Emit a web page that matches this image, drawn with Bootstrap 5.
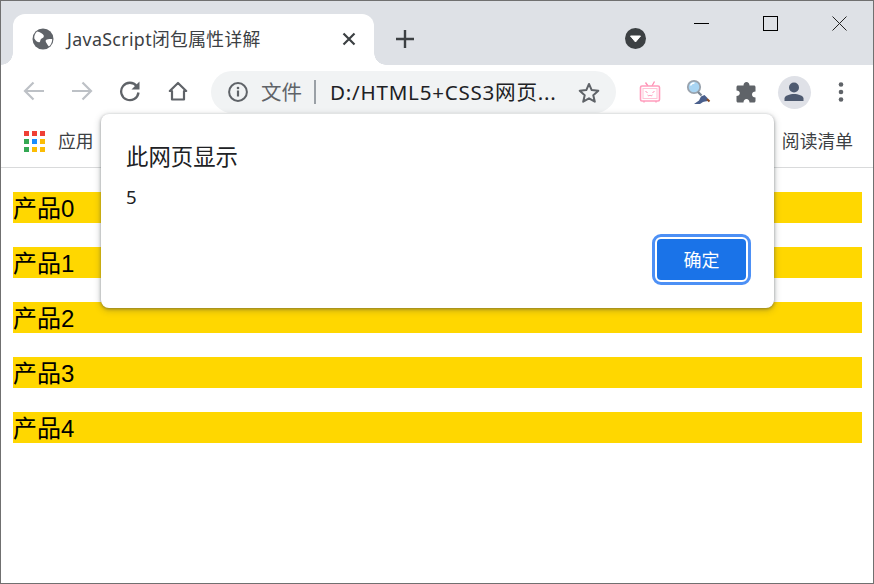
<!DOCTYPE html>
<html lang="zh">
<head>
<meta charset="utf-8">
<title>JavaScript闭包属性详解</title>
<link href="https://cdn.jsdelivr.net/npm/bootstrap@5.3.0/dist/css/bootstrap.min.css" rel="stylesheet">
<style>
html,body{margin:0;height:100%;background:#fff}
body{font-family:"Noto Sans","Noto Sans CJK SC",sans-serif;overflow:hidden}
.chrome-win{width:874px;height:584px;border:1px solid #707070;position:relative;overflow:hidden;background:#fff;color:#202124}
.tabstrip{height:64px;background:#dee1e6;padding:13px 0 0 12px}
.tabstrip>*{flex-shrink:0}
.tab-cur{width:361px;height:51px;background:#fff;border-radius:12px 12px 0 0;position:relative;padding:0 18px 1px 19px}
.tab-cur::before,.tab-cur::after{content:"";position:absolute;bottom:0;width:12px;height:12px}
.tab-cur::before{left:-12px;background:radial-gradient(circle at 0 0,#dee1e6 11.5px,#fff 12px)}
.tab-cur::after{right:-12px;background:radial-gradient(circle at 100% 0,#dee1e6 11.5px,#fff 12px)}
.tab-title{font-size:17.8px;margin-left:13px;color:#3c4043;white-space:nowrap;letter-spacing:.35px}
.newtab{margin-left:22px;margin-top:-2px}
.media-btn{margin-left:211px;margin-top:-2px}
.win-ctrls{margin-left:auto;margin-right:-1px;align-self:flex-start;margin-top:-13px}
.win-ctrl{width:69px;height:45px}
.toolbar{height:51px;padding:6px 0 0 0}
.navbtn{width:48px;height:40px}
.first-nav{margin-left:9px}
.omnibox{width:405px;height:42px;background:#f1f3f4;border-radius:21px;margin-left:9px;padding:0 16px 0 17px}
.sec-label{font-size:20.5px;color:#5f6368;margin-left:13px}
.sep{width:2px;height:24px;background:#9aa0a6;margin:0 14px 0 12px}
.url{font-size:20.6px;color:#202124;flex:1;white-space:nowrap;letter-spacing:.75px}
.tools{margin-left:10px}
.toolbtn{width:48px;height:42px}
.menu-btn{margin-left:-1px}
.avatar{width:33px;height:33px;border-radius:50%;background:#dfe1e7}
.bookmarks{height:52px;border-bottom:1px solid #d9dadb;padding:0 20px 0 23px;font-size:17.8px;color:#3c4043}
.bm-apps{margin-right:auto;gap:13px}
.pagebody{padding:24px 11px 0 12px}
.prod{height:31px;background:#ffd700;margin-bottom:24px;color:#000;font-family:"Liberation Sans","Noto Sans CJK SC",sans-serif;font-size:24px;line-height:33px}
.alert-box{position:absolute;left:100px;top:113px;width:673px;height:194px;background:#fff;border-radius:8px;box-shadow:0 1px 3px rgba(60,64,67,.45),0 2px 6px 1px rgba(60,64,67,.25);padding:25px 26px 0 25px}
.alert-title{font-size:22.4px;line-height:36px;color:#202124}
.alert-msg{font-size:18.6px;line-height:24px;margin-top:10px;color:#202124}
.btn-ok{width:93px;height:45px;background:#1a73e8;border:2px solid #fff;border-radius:6px;outline:3px solid #4d90f5;outline-offset:0;color:#fff;font-size:18px;padding:0;line-height:1}
.btn-ok:hover{background:#1a73e8;color:#fff;border-color:#fff}
.alert-foot{margin-top:28px}
</style>
</head>
<body>
<div class="chrome-win">
  <div class="tabstrip d-flex align-items-center">
    <div class="tab-cur d-flex align-items-center">
      <svg width="22" height="22" viewBox="0 0 22 22" aria-hidden="true"><circle cx="11" cy="11" r="10.500" fill="#5f6368"/><path d="M5 3.500c1.500.2 3 .8 4.500 1.800 1.500.9 2.500 1.800 2.300 3.300-.3 1.500-2 1.500-2.800 2.500-.8 1.100-.5 2.200-1.200 3-1 .8-3.500-.3-5.500-3.600C2 8 3 5.300 5 3.500z" fill="#fff"/><path d="M14 12c1.700-1 3.500-1.200 6.200-1 .1 2.800-1 5.500-3.200 7.500-1.200-.8-1.600-2-2.200-3-.6-1.100-1.800-2.500-.8-3.500z" fill="#fff"/></svg>
      <span class="tab-title">JavaScript闭包属性详解</span>
      <svg class="ms-auto" width="14" height="14" viewBox="0 0 14 14" aria-hidden="true"><path d="M1.500 1.500l11 11M12.500 1.500l-11 11" stroke="#3c4043" stroke-width="2.200" fill="none"/></svg>
    </div>
    <svg class="newtab" width="18" height="18" viewBox="0 0 18 18" aria-hidden="true"><path d="M9 0v18M0 9h18" stroke="#3c4043" stroke-width="2.400" fill="none"/></svg>
    <svg class="media-btn" width="21" height="21" viewBox="0 0 21 21" aria-hidden="true"><circle cx="10.500" cy="10.500" r="10.500" fill="#3c4043"/><path d="M5.500 8h10l-5 6z" fill="#fff" stroke="#fff" stroke-linejoin="round"/></svg>
    <div class="win-ctrls d-flex">
      <div class="win-ctrl d-flex align-items-center justify-content-center"><svg width="15" height="15" viewBox="0 0 15 15" aria-hidden="true"><path d="M0 7.500h15" stroke="#000" stroke-width="1" fill="none"/></svg></div>
      <div class="win-ctrl d-flex align-items-center justify-content-center"><svg width="15" height="15" viewBox="0 0 15 15" aria-hidden="true"><rect x=".5" y=".5" width="14" height="14" stroke="#000" fill="none"/></svg></div>
      <div class="win-ctrl d-flex align-items-center justify-content-center"><svg width="15" height="15" viewBox="0 0 15 15" aria-hidden="true"><path d="M.5.500l14 14M14.500.500l-14 14" stroke="#222" stroke-width="1" fill="none"/></svg></div>
    </div>
  </div>

  <div class="toolbar d-flex align-items-start">
    <div class="navbtn first-nav d-flex align-items-center justify-content-center"><svg width="22" height="20" viewBox="0 0 22 20" aria-hidden="true"><path d="M21 10H2M10.500 1.500L2 10l8.500 8.500" stroke="#bdc1c6" stroke-width="2.200" fill="none"/></svg></div>
    <div class="navbtn d-flex align-items-center justify-content-center"><svg width="22" height="20" viewBox="0 0 22 20" aria-hidden="true"><path d="M1 10h19M11.500 1.500L20 10l-8.500 8.500" stroke="#bdc1c6" stroke-width="2.200" fill="none"/></svg></div>
    <div class="navbtn d-flex align-items-center justify-content-center"><svg width="22" height="22" viewBox="0 0 22 22" aria-hidden="true"><path d="M17.800 6.200A8.700 8.700 0 1 0 19.500 12.500" stroke="#5f6368" stroke-width="2.300" fill="none"/><path d="M20.500 1.500v8h-8z" fill="#5f6368"/></svg></div>
    <div class="navbtn d-flex align-items-center justify-content-center"><svg width="20" height="20" viewBox="0 0 20 20" aria-hidden="true"><path d="M10 2L1.800 10H4v8.500h12V10h2.200z" fill="none" stroke="#5f6368" stroke-width="2.200" stroke-linejoin="round"/></svg></div>
    <div class="omnibox d-flex align-items-center">
      <svg width="20" height="20" viewBox="0 0 20 20" aria-hidden="true"><circle cx="10" cy="10" r="8.900" stroke="#5f6368" stroke-width="2" fill="none"/><path d="M10 8.500v6" stroke="#5f6368" stroke-width="2.200"/><circle cx="10" cy="6" r="1.300" fill="#5f6368"/></svg>
      <span class="sec-label">文件</span>
      <span class="sep"></span>
      <span class="url">D:/HTML5+CSS3网页...</span>
      <svg width="22" height="21" viewBox="0 0 22 21" aria-hidden="true"><path d="M11 2l2.700 6.100 6.600.7-5 4.400 1.500 6.500L11 16.300 5.200 19.700l1.500-6.500-5-4.400 6.600-.7z" fill="none" stroke="#5f6368" stroke-width="2" stroke-linejoin="round"/></svg>
    </div>
    <div class="tools d-flex">
      <div class="toolbtn d-flex align-items-center justify-content-center"><svg width="22" height="22" viewBox="0 0 22 22" aria-hidden="true"><path d="M6.500 1.500L9 5M15.500.500L13 5" stroke="#ff8eb3" stroke-width="1.300" fill="none"/><rect x="1.500" y="5" width="19" height="15" rx="1.500" fill="#fff" stroke="#ff9dbd" stroke-width="1.600"/><rect x="4" y="7.500" width="14" height="10" fill="#fff" stroke="#ffc4d6" stroke-width="1"/><path d="M6.500 10.500l2 1M15.500 10.500l-2 1M8.500 14c1 1 1.700 1 2.500 0 .8 1 1.500 1 2.500 0" stroke="#ff8eb3" stroke-width="1" fill="none"/><path d="M5 20v1.500M17 20v1.500" stroke="#ff9dbd" stroke-width="1.500"/></svg></div>
      <div class="toolbtn d-flex align-items-center justify-content-center"><svg width="26" height="26" viewBox="0 0 26 26" aria-hidden="true"><circle cx="9" cy="8" r="6.200" fill="#a9d5f3" stroke="#9aa3ad" stroke-width="1.800"/><path d="M5.500 6.500a4 4 0 0 1 4-2.500" stroke="#fff" stroke-width="1.300" fill="none"/><path d="M13 13l3.500 3.500" stroke="#7b8794" stroke-width="2.400"/><path d="M9 25l5-3.500 2-4 3.500-1.500 3 3 .5 3-3 .5-2 .5L15 25z" fill="#4a5f8c"/><path d="M22 20l2.500 2.500" stroke="#8a4a24" stroke-width="2"/></svg></div>
      <div class="toolbtn d-flex align-items-center justify-content-center"><svg width="22" height="22" viewBox="0 0 22 22" aria-hidden="true"><path d="M8.500 4.500C8.500 2.500 9.800 1 11.500 1S14.500 2.500 14.500 4.500H19c.8 0 1.500.7 1.500 1.500v4.500c-2 0-3.500 1.200-3.500 2.900s1.500 3 3.500 3V20c0 .8-.7 1.500-1.500 1.500h-4.500c0-2-1.300-3.500-3-3.500s-3 1.500-3 3.500H3c-.8 0-1.500-.7-1.500-1.500v-5c2 0 3.300-1.200 3.300-2.800S3.500 9.500 1.500 9.500V6C1.500 5.200 2.200 4.500 3 4.500z" fill="#5f6368"/></svg></div>
      <div class="toolbtn d-flex align-items-center justify-content-center"><div class="avatar d-flex align-items-center justify-content-center"><svg width="24" height="24" viewBox="0 0 24 24" aria-hidden="true"><circle cx="12" cy="7.500" r="5" fill="#4e5a70"/><path d="M2.500 21v-2.500C2.500 15.500 8 14 12 14s9.500 1.500 9.500 4.500V21z" fill="#4e5a70"/></svg></div></div>
      <div class="toolbtn menu-btn d-flex align-items-center justify-content-center"><svg width="6" height="22" viewBox="0 0 6 22" aria-hidden="true"><circle cx="3" cy="3.500" r="2.300" fill="#5f6368"/><circle cx="3" cy="11" r="2.300" fill="#5f6368"/><circle cx="3" cy="18.500" r="2.300" fill="#5f6368"/></svg></div>
    </div>
  </div>

  <div class="bookmarks d-flex align-items-center">
    <div class="bm-apps d-flex align-items-center">
      <svg width="21" height="21" viewBox="0 0 21 21" aria-hidden="true"><g><rect x="0" y="0" width="5" height="5" fill="#ef4036"/><rect x="8" y="0" width="5" height="5" fill="#ef4036"/><rect x="16" y="0" width="5" height="5" fill="#ef4036"/><rect x="0" y="8" width="5" height="5" fill="#34a853"/><rect x="8" y="8" width="5" height="5" fill="#1a8cff"/><rect x="16" y="8" width="5" height="5" fill="#fbbc05"/><rect x="0" y="16" width="5" height="5" fill="#34a853"/><rect x="8" y="16" width="5" height="5" fill="#fbbc05"/><rect x="16" y="16" width="5" height="5" fill="#fbbc05"/></g></svg>
      <span>应用</span>
    </div>
    <span>阅读清单</span>
  </div>

  <div class="pagebody">
    <div class="prod">产品0</div>
    <div class="prod">产品1</div>
    <div class="prod">产品2</div>
    <div class="prod">产品3</div>
    <div class="prod">产品4</div>
  </div>

  <div class="alert-box">
    <div class="alert-title">此网页显示</div>
    <div class="alert-msg">5</div>
    <div class="alert-foot d-flex justify-content-end">
      <button type="button" class="btn btn-ok d-flex align-items-center justify-content-center">确定</button>
    </div>
  </div>
</div>
<script src="https://cdn.jsdelivr.net/npm/bootstrap@5.3.0/dist/js/bootstrap.bundle.min.js"></script>
</body>
</html>
